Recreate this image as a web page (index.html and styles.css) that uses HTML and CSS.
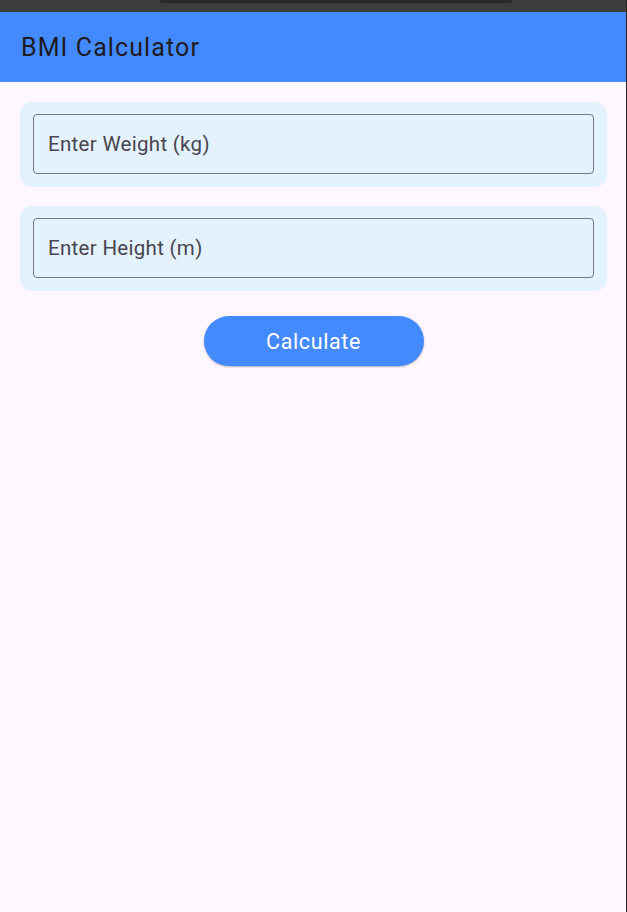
FILE: index.html
```html
<!DOCTYPE html>
<html>
<head>
<meta charset="utf-8">
<link rel="stylesheet" href="styles.css">
</head>
<body>
<div class="screen">
  <div class="status"><div class="notch"></div></div>
  <header class="appbar"><h1 class="title">BMI Calculator</h1></header>
  <main class="content">
    <div class="card"><div class="field">Enter Weight (kg)</div></div>
    <div class="card"><div class="field">Enter Height (m)</div></div>
    <div class="actions"><button class="btn">Calculate</button></div>
  </main>
</div>
</body>
</html>
```
FILE: styles.css
```css
html, body { margin: 0; padding: 0; }
body { background: #fef7ff; font-family: Roboto, "Noto Sans", sans-serif; }
.screen { width: 627px; height: 912px; display: flex; flex-direction: column; background: #fef7ff; border-right: 1px solid #222; box-sizing: border-box; overflow: hidden; }
.status { height: 12px; background: #3c3c3c; display: flex; flex-shrink: 0; }
.notch { width: 352px; height: 3px; background: #282828; border-radius: 0 0 8px 8px; margin-left: 160px; }
.appbar { height: 70px; background: #448aff; display: flex; align-items: center; padding: 0 21px; flex-shrink: 0; }
.title { margin: 0; font-size: 25px; font-weight: 400; color: #1d1b20; letter-spacing: 1.1px; }
.content { padding: 20px 19px 20px 20px; display: flex; flex-direction: column; gap: 19px; }
.card { background: #e3f2fd; border-radius: 12px; padding: 12px 13px 13px 13px; }
.field { height: 60px; box-sizing: border-box; border: 1px solid #79747e; border-radius: 4px; display: flex; align-items: center; padding-left: 14px; font-size: 20.5px; color: #49454f; letter-spacing: 0.3px; }
.actions { display: flex; justify-content: center; margin-top: 6px; }
.btn { width: 220px; height: 50px; border: none; border-radius: 25px; background: #448aff; color: #fff; font-family: Roboto, sans-serif; font-size: 21.5px; letter-spacing: 0.6px; box-shadow: 0 1px 2px rgba(0,0,0,0.3); padding: 0; }
```
